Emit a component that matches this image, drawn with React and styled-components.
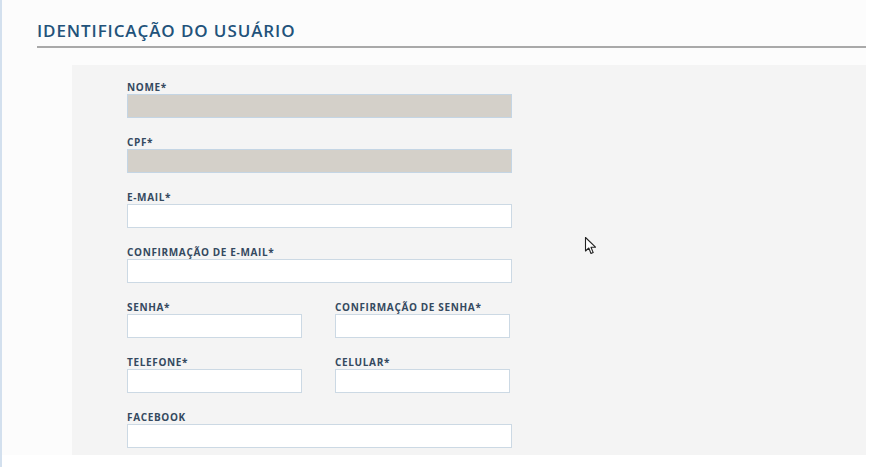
import React from "react";
import styled, { createGlobalStyle } from "styled-components";

const GlobalStyle = createGlobalStyle`
  html, body {
    margin: 0;
    padding: 0;
    background: #ffffff;
  }
  body {
    font-family: "Open Sans", "Liberation Sans", sans-serif;
  }
`;

const Page = styled.div`
  position: relative;
  height: 467px;
  width: 886px;
  overflow: hidden;
  border-left: 2px solid #d3e0ee;
  box-sizing: border-box;
`;

const Section = styled.div`
  width: 864px;
  background: #fcfcfc;
  padding-top: 20px;
`;

const Header = styled.div`
  margin-left: 35px;
  border-bottom: 2px solid #a9a9a9;
  padding-bottom: 4px;
`;

const Title = styled.h2`
  margin: 0;
  font-size: 17px;
  font-weight: 600;
  line-height: 22px;
  color: #22527a;
  letter-spacing: 0.9px;
`;

const Panel = styled.div`
  margin: 17px 0 0 70px;
  background: #f4f4f4;
  padding: 16px 0 7px 55px;
  display: flex;
  flex-direction: column;
  gap: 18px;
`;

const Row = styled.div`
  display: grid;
  grid-template-columns: ${(p) => (p.split ? "175px 175px" : "385px")};
  column-gap: 33px;
`;

const Field = styled.div`
  display: flex;
  flex-direction: column;
`;

const Label = styled.label`
  font-size: 10px;
  font-weight: 700;
  line-height: 12px;
  color: #34495f;
  margin-bottom: 1px;
  white-space: nowrap;
  letter-spacing: 0.65px;
`;

const Input = styled.input`
  box-sizing: border-box;
  height: 24px;
  width: 100%;
  margin: 0;
  border: 1px solid ${(p) => (p.locked ? "#c4d5e4" : "#ccd9e4")};
  background: ${(p) => (p.locked ? "#d4d0c9" : "#ffffff")};
  outline: none;
  padding: 0 4px;
  font-family: inherit;
  font-size: 11px;
`;

const Cursor = styled.svg`
  position: absolute;
  left: 582px;
  top: 236px;
`;

const fields = [
  [{ label: "NOME*", locked: true }],
  [{ label: "CPF*", locked: true }],
  [{ label: "E-MAIL*" }],
  [{ label: "CONFIRMAÇÃO DE E-MAIL*" }],
  [{ label: "SENHA*", type: "password" }, { label: "CONFIRMAÇÃO DE SENHA*", type: "password" }],
  [{ label: "TELEFONE*" }, { label: "CELULAR*" }],
  [{ label: "FACEBOOK" }],
];

export default function App() {
  return (
    <>
      <GlobalStyle />
      <Page>
        <Section>
          <Header>
            <Title>IDENTIFICAÇÃO DO USUÁRIO</Title>
          </Header>
          <Panel>
            {fields.map((row, i) => (
              <Row key={i} split={row.length > 1}>
                {row.map((f) => (
                  <Field key={f.label}>
                    <Label>{f.label}</Label>
                    <Input locked={f.locked} readOnly type={f.type || "text"} />
                  </Field>
                ))}
              </Row>
            ))}
          </Panel>
        </Section>
        <Cursor width="14" height="20" viewBox="0 0 14 20">
          <path
            d="M1.5 1.5 L1.5 15 L4.8 12 L7 17.5 L9.2 16.6 L7 11.2 L11.5 11.2 Z"
            fill="#ffffff"
            stroke="#222"
            strokeWidth="1.1"
            strokeLinejoin="round"
          />
        </Cursor>
      </Page>
    </>
  );
}
